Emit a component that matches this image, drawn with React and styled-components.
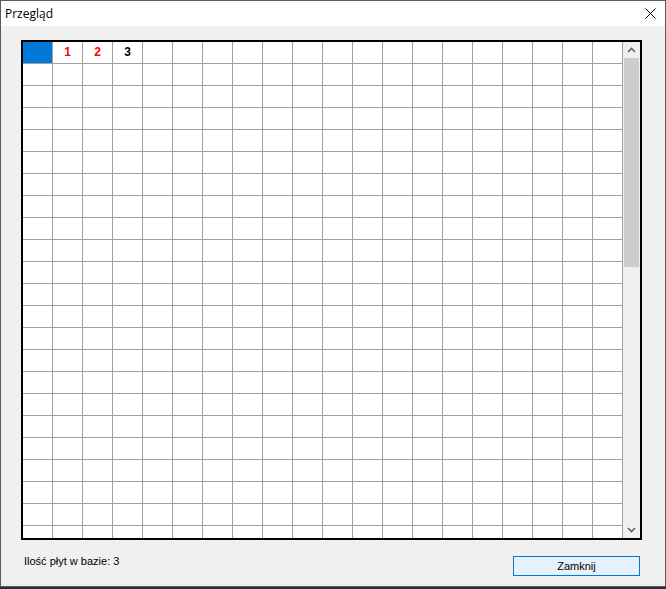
import styled, { createGlobalStyle } from 'styled-components';

const GlobalStyle = createGlobalStyle`
  html, body {
    margin: 0;
    padding: 0;
    background: #2e2e2e;
  }
  #root {
    width: 666px;
    height: 589px;
  }
`

const Okno = styled.div`
  width: 666px;
  height: 587px;
  box-sizing: border-box;
  border: 1px solid #5a5a5a;
  background: #f0f0f0;
  display: flex;
  flex-direction: column;
  font-family: "Liberation Sans", Arial, sans-serif;
`

const PasekTytulu = styled.div`
  height: 25px;
  background: #ffffff;
  display: flex;
  align-items: center;
  justify-content: space-between;
  padding-left: 4px;
  padding-right: 9px;
  flex-shrink: 0;
`

const Tytul = styled.span`
  font-family: "Open Sans", "Noto Sans", sans-serif;
  font-size: 12px;
  color: #000;
  margin-top: -1px;
`

const Zawartosc = styled.div`
  flex: 1;
  display: flex;
  flex-direction: column;
  padding: 14px 23px 0 20px;
`

const Siatka = styled.div`
  width: 621px;
  height: 500px;
  box-sizing: border-box;
  border: 2px solid #000;
  display: flex;
  background: #ffffff;
`

const Tabela = styled.div`
  width: 600px;
  height: 100%;
  overflow: hidden;
  display: grid;
  grid-template-columns: repeat(20, 30px);
  grid-auto-rows: 22px;
`

const Komorka = styled.div`
  box-sizing: border-box;
  border-right: 1px solid #a0a0a0;
  border-bottom: 1px solid #a0a0a0;
  background: ${p => (p.$zaznaczona ? '#0078d7' : '#ffffff')};
  color: ${p => p.$kolor || '#000'};
  font-weight: bold;
  font-size: 12px;
  display: flex;
  align-items: center;
  justify-content: center;
  padding-bottom: 1px;
`

const PasekPrzewijania = styled.div`
  width: 17px;
  background: #f0f0f0;
  display: flex;
  flex-direction: column;
`

const Strzalka = styled.div`
  height: 16px;
  display: flex;
  align-items: center;
  justify-content: center;
  flex-shrink: 0;
`

const Tor = styled.div`
  flex: 1;
  padding: 0 1px;
`

const Suwak = styled.div`
  height: 209px;
  background: #cdcdcd;
`

const Stopka = styled.div`
  display: flex;
  justify-content: space-between;
  align-items: flex-start;
  padding: 15px 0 0 3px;
`

const Etykieta = styled.span`
  font-size: 11px;
  line-height: 13px;
  color: #000;
`

const Przycisk = styled.button`
  width: 127px;
  height: 20px;
  box-sizing: border-box;
  margin-top: 1px;
  margin-right: 2px;
  border: 1px solid #0078d7;
  background: #e5f1fb;
  font-family: "Liberation Sans", Arial, sans-serif;
  font-size: 11px;
  color: #000;
  padding: 0;
`

const naglowki = { 1: { tekst: '1', kolor: '#ff0000' }, 2: { tekst: '2', kolor: '#ff0000' }, 3: { tekst: '3', kolor: '#000' } }

function App() {
  const komorki = [];
  for (let r = 0; r < 23; r++) {
    for (let c = 0; c < 20; c++) {
      const n = r === 0 ? naglowki[c] : null;
      komorki.push(
        <Komorka key={r + '-' + c} $zaznaczona={r === 0 && c === 0} $kolor={n && n.kolor}>
          {n && n.tekst}
        </Komorka>
      );
    }
  }

  return (
    <>
      <GlobalStyle />
      <Okno>
        <PasekTytulu>
          <Tytul>Przegląd</Tytul>
          <svg width="11" height="11" viewBox="0 0 11 11">
            <path d="M0.5 0.5 L10.5 10.5 M10.5 0.5 L0.5 10.5" stroke="#000" strokeWidth="1" />
          </svg>
        </PasekTytulu>
        <Zawartosc>
          <Siatka>
            <Tabela>{komorki}</Tabela>
            <PasekPrzewijania>
              <Strzalka>
                <svg width="9" height="6" viewBox="0 0 9 6">
                  <path d="M1 5 L4.5 1.5 L8 5" stroke="#606060" strokeWidth="1.6" fill="none" />
                </svg>
              </Strzalka>
              <Tor>
                <Suwak />
              </Tor>
              <Strzalka>
                <svg width="9" height="6" viewBox="0 0 9 6">
                  <path d="M1 1 L4.5 4.5 L8 1" stroke="#606060" strokeWidth="1.6" fill="none" />
                </svg>
              </Strzalka>
            </PasekPrzewijania>
          </Siatka>
          <Stopka>
            <Etykieta>Ilość płyt w bazie: 3</Etykieta>
            <Przycisk>Zamknij</Przycisk>
          </Stopka>
        </Zawartosc>
      </Okno>
    </>
  );
}

export default App;
